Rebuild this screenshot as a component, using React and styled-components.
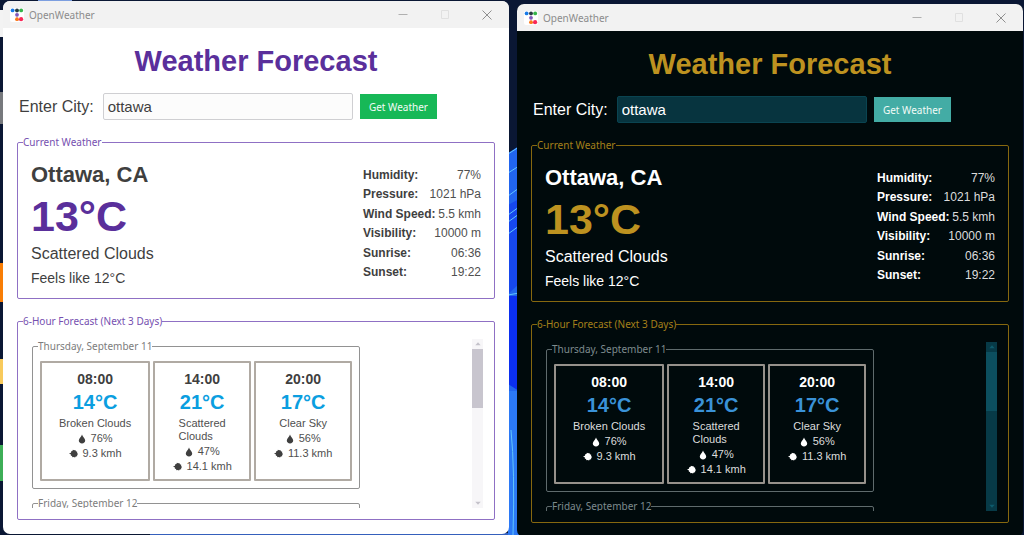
import React, { useId, useState } from "react";
import styled, { createGlobalStyle, ThemeProvider } from "styled-components";

const lightTheme = {
  window: "#ffffff",
  title: "#5a2f9b",
  text: "#3f3f3f",
  detail: "#4f4f4f",
  legend: "#7650b0",
  frame: "#8f70c4",
  input: "#fcfcfc",
  inputBorder: "#cfcfd2",
  button: "#17b857",
  temp: "#0b9ee0",
  dayLegend: "#7c7c7c",
  dayFrame: "#929292",
  slotFrame: "#b0aaa3",
  track: "#f7f6f8",
  thumb: "#c8c5ce",
  arrow: "#c4c2ca",
};

const darkTheme = {
  window: "#000a0c",
  title: "#bd9220",
  text: "#ffffff",
  detail: "#dcdcdc",
  legend: "#a5801a",
  frame: "#86680f",
  input: "#07343f",
  inputBorder: "#0a4451",
  button: "#43aca5",
  temp: "#3a92d8",
  dayLegend: "#7e8b8e",
  dayFrame: "#5f6b6d",
  slotFrame: "#96918b",
  track: "#073a47",
  thumb: "#0c4f5f",
  arrow: "#0e5a6b",
};

const details = [
  ["Humidity:", "77%"],
  ["Pressure:", "1021 hPa"],
  ["Wind Speed:", "5.5 kmh"],
  ["Visibility:", "10000 m"],
  ["Sunrise:", "06:36"],
  ["Sunset:", "19:22"],
];

const days = [
  {
    date: "Thursday, September 11",
    slots: [
      { time: "08:00", temp: "14°C", sky: "Broken Clouds", humidity: "76%", wind: "9.3 kmh" },
      { time: "14:00", temp: "21°C", sky: "Scattered\nClouds", humidity: "47%", wind: "14.1 kmh" },
      { time: "20:00", temp: "17°C", sky: "Clear Sky", humidity: "56%", wind: "11.3 kmh" },
    ],
  },
  { date: "Friday, September 12", slots: [] },
];

const GlobalStyle = createGlobalStyle`
  * {
    box-sizing: border-box;
  }

  body {
    margin: 0;
    overflow: hidden;
    background: #0a1734;
    font-family: "Liberation Sans", Arial, sans-serif;
  }
`;

const Desktop = styled.main`
  position: relative;
  display: flex;
  align-items: flex-start;
  gap: 8px;
  height: 100vh;
  padding: 1px 1px 0 3px;
  overflow: hidden;
`;

const WallpaperArt = styled.svg`
  position: absolute;
  inset: 0;
  width: 100%;
  height: 100%;
`;

const AppWindow = styled.section`
  position: relative;
  flex: 1;
  min-width: 0;
  margin-top: ${(props) => (props.$lowered ? "3px" : "0")};
  border-radius: 7px;
  overflow: hidden;
  background: ${(props) => props.theme.window};
  color: ${(props) => props.theme.text};
`;

const TitleBar = styled.header`
  display: flex;
  align-items: center;
  height: 27px;
  padding: 0 1px 0 7px;
  background: #f2f2f2;
`;

const AppName = styled.span`
  flex: 1;
  margin-left: 5px;
  color: #8c8c8c;
  font: 10px/14px "Noto Sans", sans-serif;
`;

const WindowButton = styled.button`
  display: flex;
  align-items: center;
  justify-content: center;
  width: 42px;
  height: 27px;
  padding: 0;
  border: 0;
  background: none;
  color: ${(props) => props.$color};
`;

const Content = styled.div`
  display: flex;
  flex-direction: column;
  gap: 15px;
  padding: 16px 14px 14px;
`;

const Title = styled.h1`
  margin: 0;
  color: ${(props) => props.theme.title};
  font-size: 29px;
  line-height: 34px;
  text-align: center;
`;

const SearchForm = styled.form`
  display: flex;
  align-items: center;
  padding: 0 58px 0 2px;
`;

const CityLabel = styled.label`
  margin-right: 9px;
  font-size: 16px;
  line-height: 20px;
`;

const CityInput = styled.input`
  flex: 1;
  min-width: 0;
  height: 27px;
  margin-right: 7px;
  padding: 0 4px;
  border: 1px solid ${(props) => props.theme.inputBorder};
  border-radius: 2px;
  background: ${(props) => props.theme.input};
  color: ${(props) => props.theme.text};
  font: 15px "Liberation Sans", Arial, sans-serif;
`;

const SubmitButton = styled.button`
  height: 25px;
  padding: 0 9px;
  border: 0;
  background: ${(props) => props.theme.button};
  color: #f2fbf6;
  font: 10px/14px "Noto Sans", sans-serif;
`;

const Frame = styled.fieldset`
  min-width: 0;
  margin: 0;
  padding: 0 5px;
  border: 1px solid ${(props) => props.theme.frame};
  border-radius: 2px;
`;

const FrameLegend = styled.legend`
  padding: 0;
  color: ${(props) => props.theme.legend};
  font: 10px/14px "Noto Sans", sans-serif;
`;

const DayFrame = styled(Frame)`
  border-color: ${(props) => props.theme.dayFrame};
`;

const DayLegend = styled(FrameLegend)`
  color: ${(props) => props.theme.dayLegend};
`;

const Current = styled.div`
  display: flex;
  justify-content: space-between;
  padding: 13px 8px 10px;
`;

const Summary = styled.div`
  display: flex;
  flex-direction: column;
  gap: 4px;
`;

const Place = styled.h2`
  margin: 0;
  font-size: 22px;
  line-height: 26px;
`;

const Temperature = styled.strong`
  color: ${(props) => props.theme.title};
  font-size: 43px;
  line-height: 48px;
`;

const Condition = styled.span`
  font-size: ${(props) => (props.$small ? "14px" : "16px")};
  line-height: 20px;
`;

const DetailList = styled.dl`
  display: flex;
  flex-direction: column;
  justify-content: space-between;
  width: 118px;
  margin: 0;
  padding: 6px 0 9px;
  font-size: 12px;
  line-height: 14px;
  white-space: nowrap;
`;

const DetailRow = styled.div`
  display: flex;
  justify-content: space-between;

  dt {
    font-weight: bold;
  }

  dd {
    margin: 0;
    color: ${(props) => props.theme.detail};
  }
`;

const Forecast = styled.div`
  display: flex;
  justify-content: space-between;
  height: 191px;
  padding: 11px 6px 11px 9px;
`;

const DayList = styled.div`
  display: grid;
  align-content: start;
  gap: 7px;
  overflow: hidden;
`;

const Slots = styled.div`
  display: flex;
  gap: 3px;
  min-height: 135px;
  padding: 8px 2px 7px;
`;

const Slot = styled.article`
  display: flex;
  flex-direction: column;
  align-items: center;
  gap: 2px;
  min-width: 98px;
  padding: 8px 17px 6px;
  border: 2px solid ${(props) => props.theme.slotFrame};
  border-radius: 1px;
  color: ${(props) => props.theme.detail};
  font-size: 11px;
  line-height: 13px;
`;

const SlotTime = styled.strong`
  color: ${(props) => props.theme.text};
  font-size: 14px;
  line-height: 17px;
`;

const SlotTemp = styled.strong`
  color: ${(props) => props.theme.temp};
  font-size: 20px;
  line-height: 25px;
`;

const Sky = styled.span`
  white-space: pre;
`;

const Reading = styled.span`
  display: flex;
  align-items: center;
  gap: 5px;
  white-space: nowrap;

  svg {
    color: ${(props) => props.theme.text};
  }
`;

const ScrollTrack = styled.div`
  display: flex;
  flex-direction: column;
  align-items: center;
  width: 11px;
  background: ${(props) => props.theme.track};
  color: ${(props) => props.theme.arrow};
`;

const ScrollThumb = styled.div`
  width: 100%;
  height: 59px;
  margin-bottom: auto;
  background: ${(props) => props.theme.thumb};
`;

const Wallpaper = () => (
  <WallpaperArt viewBox="0 0 1024 535" preserveAspectRatio="none" aria-hidden="true">
    <rect width="1024" height="535" fill="#0a1734" />
    <rect x="38" width="34" height="3" fill="#7d9fe0" />
    <rect y="10" width="3" height="27" fill="#f3f3f3" />
    <rect y="92" width="3" height="32" fill="#77797d" />
    <rect y="263" width="3" height="39" fill="#f87d05" />
    <rect y="359" width="3" height="25" fill="#f8ca5c" />
    <rect y="445" width="8" height="36" fill="#3dae57" />
    <path d="M508 153l11-7v389h-11z" fill="#2165ef" />
    <path d="M508 205l11-6v85l-11 10z" fill="#1648ee" />
    <path d="M508 296h11v95l-11-7z" fill="#0b2ff0" />
    <path d="M508 391h11v144h-11z" fill="#2b79f6" />
    <g fill="none" stroke="#61c5ff">
      <path d="M508 154l11-7M508 173l11-7M508 196l11-8M508 215l11-8M508 222l11-8M508 234l11-8M508 295l11-2" />
      <path d="M511 430q4 40 2 105" />
    </g>
    <path d="M150 535h358v-2H150z" fill="#3560bc" />
  </WallpaperArt>
);

const AppIcon = () => (
  <svg width="14" height="14" viewBox="0 0 14 14" aria-hidden="true">
    <rect width="14" height="14" rx="2" fill="#fff" />
    <path d="M3 2h8M7 2v10h4" fill="none" stroke="#d5cce2" />
    <circle cx="2.6" cy="2.4" r="1.9" fill="#187be8" />
    <circle cx="7" cy="2.4" r="1.9" fill="#263b40" />
    <circle cx="11.2" cy="2.4" r="1.9" fill="#35b54a" />
    <circle cx="7" cy="6.8" r="1.9" fill="#8058bd" />
    <circle cx="7" cy="11.2" r="1.9" fill="#fb7818" />
    <circle cx="11.1" cy="11.2" r="2.1" fill="#f92757" />
  </svg>
);

const ControlIcon = ({ path }) => (
  <svg width="10" height="10" viewBox="0 0 10 10" fill="none" stroke="currentColor" aria-hidden="true">
    <path d={path} />
  </svg>
);

const DropIcon = () => (
  <svg width="8" height="10" viewBox="0 0 8 10" fill="currentColor" aria-hidden="true">
    <path d="M4 .5C3.600 2.600.8 4.300.8 6.600c0 1.700 1.400 2.900 3.200 2.900s3.200-1.200 3.200-2.900C7.200 4.300 4.400 2.600 4 .5z" />
  </svg>
);

const WindIcon = () => (
  <svg width="9" height="9" viewBox="0 0 9 9" fill="currentColor" aria-hidden="true">
    <path d="M0 4.300L2 3.700l.2-1.500 1.200-.2.500-1.200 1.200.5 1.200-.3.600 1.200 1.300.5-.1 1.300L9 4.900l-.8 1-.1 1.300-1.300.3-.8 1-1.200-.5-1.300.3-.6-1.200-1.100-.6.100-1z" />
  </svg>
);

const ArrowIcon = ({ down }) => (
  <svg width="10" height="10" viewBox="0 0 10 10" fill="currentColor" aria-hidden="true">
    <path d={down ? "M2.300 3.700h5.400L5 6.700z" : "M2.300 6.300h5.400L5 3.300z"} />
  </svg>
);

const WeatherWindow = ({ theme, lowered }) => {
  const cityId = useId();
  const [city, setCity] = useState("ottawa");

  return (
    <ThemeProvider theme={theme}>
      <AppWindow $lowered={lowered}>
        <TitleBar>
          <AppIcon />
          <AppName>OpenWeather</AppName>
          <WindowButton $color="#b0b0b0" aria-label="Minimize">
            <ControlIcon path="M.5 4.500h9" />
          </WindowButton>
          <WindowButton $color="#e0e0e0" aria-label="Maximize">
            <ControlIcon path="M1.500.5h7v8h-7z" />
          </WindowButton>
          <WindowButton $color="#8f8f8f" aria-label="Close">
            <ControlIcon path="M.5.5l9 9M9.500.5l-9 9" />
          </WindowButton>
        </TitleBar>
        <Content>
          <Title>Weather Forecast</Title>
          <SearchForm onSubmit={(e) => e.preventDefault()}>
            <CityLabel htmlFor={cityId}>Enter City:</CityLabel>
            <CityInput id={cityId} value={city} onChange={(e) => setCity(e.target.value)} />
            <SubmitButton type="submit">Get Weather</SubmitButton>
          </SearchForm>
          <Frame>
            <FrameLegend>Current Weather</FrameLegend>
            <Current>
              <Summary>
                <Place>Ottawa, CA</Place>
                <Temperature>13°C</Temperature>
                <Condition>Scattered Clouds</Condition>
                <Condition $small>Feels like 12°C</Condition>
              </Summary>
              <DetailList>
                {details.map(([name, value]) => (
                  <DetailRow key={name}>
                    <dt>{name}</dt>
                    <dd>{value}</dd>
                  </DetailRow>
                ))}
              </DetailList>
            </Current>
          </Frame>
          <Frame>
            <FrameLegend>6-Hour Forecast (Next 3 Days)</FrameLegend>
            <Forecast>
              <DayList>
                {days.map((day) => (
                  <DayFrame key={day.date}>
                    <DayLegend>{day.date}</DayLegend>
                    <Slots>
                      {day.slots.map((slot) => (
                        <Slot key={slot.time}>
                          <SlotTime>{slot.time}</SlotTime>
                          <SlotTemp>{slot.temp}</SlotTemp>
                          <Sky>{slot.sky}</Sky>
                          <Reading>
                            <DropIcon />
                            {slot.humidity}
                          </Reading>
                          <Reading>
                            <WindIcon />
                            {slot.wind}
                          </Reading>
                        </Slot>
                      ))}
                    </Slots>
                  </DayFrame>
                ))}
              </DayList>
              <ScrollTrack>
                <ArrowIcon />
                <ScrollThumb />
                <ArrowIcon down />
              </ScrollTrack>
            </Forecast>
          </Frame>
        </Content>
      </AppWindow>
    </ThemeProvider>
  );
};

const App = () => (
  <>
    <GlobalStyle />
    <Desktop>
      <Wallpaper />
      <WeatherWindow theme={lightTheme} />
      <WeatherWindow theme={darkTheme} lowered />
    </Desktop>
  </>
);

export default App;
